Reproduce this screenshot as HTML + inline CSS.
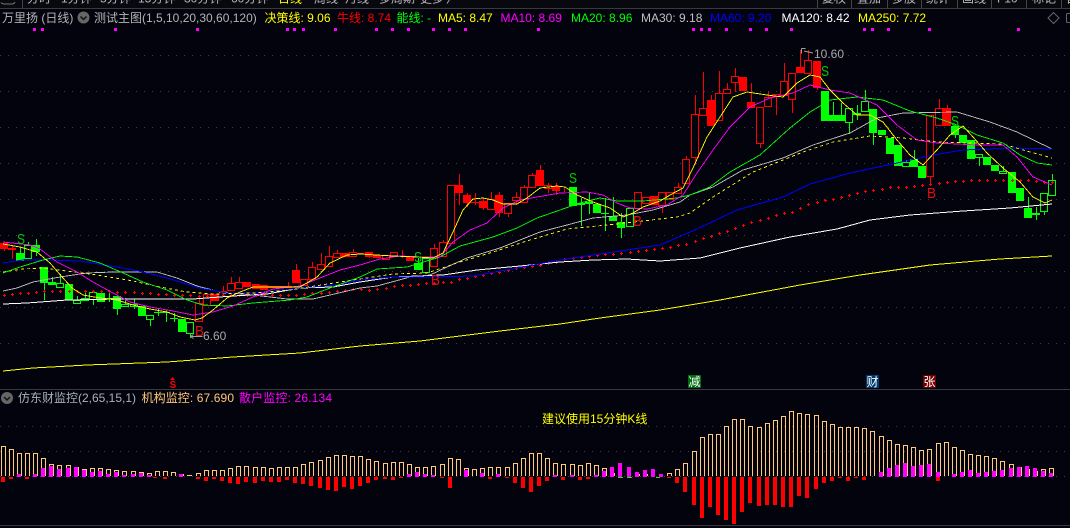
<!DOCTYPE html>
<html><head><meta charset="utf-8"><style>
html,body{margin:0;padding:0;background:#03030e;width:1070px;height:528px;overflow:hidden}
svg{display:block}
text{font-family:"Liberation Sans","Noto Sans CJK SC",sans-serif;font-size:12px}
</style></head><body>
<svg width="1070" height="528" viewBox="0 0 1070 528" xmlns="http://www.w3.org/2000/svg">
<defs><marker id="p" markerUnits="userSpaceOnUse" markerWidth="3" markerHeight="3" refX="1.5" refY="1.5"><path d="M0 1.500h3M1.500 0v3" stroke="#f00" fill="none"/></marker></defs>
<rect width="1070" height="528" fill="#03030e"/>
<rect width="1070" height="8" fill="#08080f"/>
<!-- top toolbar -->
<g fill="#b8b8b8">
<text x="27" y="2.500">分时</text><text x="61" y="2.500">1分钟</text><text x="100" y="2.500">5分钟</text><text x="138" y="2.500">15分钟</text><text x="184" y="2.500">30分钟</text><text x="231" y="2.500">60分钟</text><text x="278" y="2.500" fill="#ff0">日线</text><text x="314" y="2.500">周线</text><text x="345" y="2.500">月线</text><text x="379" y="2.500">多周期</text><text x="420" y="2.500">更多</text><text x="446" y="2.500">〉</text>
<text x="822" y="2.500">复权</text><text x="857" y="2.500">叠加</text><text x="892" y="2.500">多股</text><text x="926" y="2.500">统计</text><text x="962" y="2.500">画线</text><text x="997" y="2.500">F10</text><text x="1032" y="2.500">标记</text><text x="1066" y="2.500">自</text>
</g>
<path d="M22.500 0V8M817.500 0V8M851.500 0V8M887.500 0V8M921.500 0V8M957.500 0V8M991.500 0V8M1026.500 0V8M1061.500 0V8" stroke="#444" fill="none"/>
<path d="M1 2.500q1 1.500 3 1.500h8q2 0 3-2" stroke="#777" fill="none"/>
<path d="M0 8.500H1070M0 389.500H1070M0 525.500H1070" stroke="#3a3a3e" fill="none"/>
<!-- grid -->
<path d="M0 55.500H1070M0 91.500H1070M0 127.500H1070M0 163.500H1070M0 199.500H1070M0 235.500H1070M0 271.500H1070M0 307.500H1070M0 343.500H1070M0 426.500H1070M0 451.500H1070M0 476.500H1070" stroke="#3a3a40" stroke-dasharray="1 7" fill="none"/>
<!-- header -->
<text x="2" y="22" fill="#b4b4b4">万里扬 (日线)</text>
<circle cx="83.500" cy="17.500" r="6" fill="#666"/><path d="M80.500 16.500l3 3 3-3" stroke="#111" stroke-width="1.500" fill="none"/>
<text x="94" y="22" fill="#b4b4b4">测试主图(1,5,10,20,30,60,120)</text>
<text x="264.500" y="22" fill="#ff0">决策线: 9.06</text>
<text x="337" y="22" fill="#f00">牛线: 8.74</text>
<text x="396.500" y="22" fill="#0f0">能线: -</text>
<text x="438" y="22" fill="#ff0">MA5: 8.47</text>
<text x="500.500" y="22" fill="#f0f">MA10: 8.69</text>
<text x="571" y="22" fill="#0f0">MA20: 8.96</text>
<text x="641" y="22" fill="#c0c0c0">MA30: 9.18</text>
<text x="710" y="22" fill="#00f">MA60: 9.20</text>
<text x="781.500" y="22" fill="#fff">MA120: 8.42</text>
<text x="858" y="22" fill="#ff0">MA250: 7.72</text>
<path d="M1053.500 12.500l5.500 5.500-5.500 5.500-5.500-5.500zM1071 13.500h-3.500q-1 0-1 1v7q0 1 1 1h3.500" stroke="#666" fill="none"/>
<path fill="#f0f" d="M33 28h3v3h-3zM41 28h3v3h-3zM114 28h3v3h-3zM196 28h3v3h-3zM286 28h3v3h-3zM293 28h3v3h-3zM302 28h3v3h-3zM334 28h3v3h-3zM375 28h3v3h-3zM391 28h3v3h-3zM407 28h3v3h-3zM432 28h3v3h-3zM448 28h3v3h-3zM464 28h3v3h-3zM537 28h3v3h-3zM692 28h3v3h-3zM700 28h3v3h-3zM708 28h3v3h-3zM725 28h3v3h-3zM749 28h3v3h-3zM765 28h3v3h-3zM790 28h3v3h-3zM863 28h3v3h-3zM871 28h3v3h-3zM887 28h3v3h-3zM928 28h3v3h-3zM1017 28h3v3h-3z"/>
<!-- wicks -->
<path stroke="#f00" fill="none" d="M4.500 242V251M12.500 245V259M199.500 295V321M223.500 286V293M231.500 277V290M239.500 277V288M288.500 282V288M296.500 264V283M312.500 262V279M321.500 253V269M329.500 246V266M337.500 250V257M353.500 249V256M369.500 252V258M402.500 250V258M434.500 244V266M443.500 240V256M459.500 174V205M467.500 193V207M475.500 193V205M483.500 198V210M491.500 192V209M499.500 192V217M508.500 203V217M516.500 192V205M524.500 185V202M532.500 173V187M540.500 165V186M548.500 183V193M556.500 183V195M564.500 187V192M638.500 192V208M662.500 192V213M678.500 183V193M686.500 156V183M695.500 95V165M703.500 72V115M711.500 95V126M719.500 71V120M727.500 83V93M735.500 68V92M751.500 83V108M760.500 107V148M768.500 92V106M776.500 94V115M784.500 63V95M792.500 73V113M800.500 50V73M808.500 50V73M817.500 61V90M930.500 115V183M939.500 99V125M947.500 105V126"/>
<path stroke="#0f0" fill="none" d="M20.500 247V261M28.500 242V258M36.500 239V256M44.500 267V300M52.500 277V285M60.500 274V287M77.500 296V303M85.500 293V300M93.500 292V305M109.500 290V302M117.500 296V315M125.500 298V306M134.500 299V309M150.500 315V326M158.500 308V316M166.500 310V322M174.500 313V322M190.500 322V338M418.500 258V270M426.500 258V272M581.500 198V226M589.500 193V214M605.500 198V231M613.500 197V221M621.500 213V238M630.500 208V226M833.500 102V121M841.500 103V121M849.500 108V134M857.500 105V120M865.500 90V111M873.500 109V145M906.500 160V166M914.500 150V167M955.500 126V138M979.500 154V166M1003.500 166V173M1028.500 197V218M1036.500 207V220M1044.500 193V215M1052.500 174V195"/>
<!-- hollow candles -->
<path stroke="#f00" fill="#03030e" d="M195.500 303.500h7V321.500h-7zM203.500 294.500h7V305.500h-7zM227.500 283.500h7V290.500h-7zM235.500 282.500h7V288.500h-7zM300.500 279.500h7V285.500h-7zM308.500 267.500h7V279.500h-7zM317.500 264.500h7V269.500h-7zM325.500 256.500h7V266.500h-7zM333.500 253.500h7V257.500h-7zM349.500 252.500h7V256.500h-7zM382.500 255.500h7V259.500h-7zM390.500 252.500h7V256.500h-7zM430.500 248.500h7V266.500h-7zM439.500 242.500h7V256.500h-7zM447.500 185.500h7V243.500h-7zM487.500 199.500h7V209.500h-7zM504.500 203.500h7V213.500h-7zM512.500 197.500h7V200.500h-7zM520.500 187.500h7V202.500h-7zM528.500 175.500h7V187.500h-7zM544.500 185.500h7V188.500h-7zM634.500 192.500h7V208.500h-7zM642.500 197.500h7V203.500h-7zM658.500 192.500h7V205.500h-7zM666.500 192.500h7V199.500h-7zM674.500 187.500h7V193.500h-7zM682.500 159.500h7V183.500h-7zM691.500 114.500h7V157.500h-7zM699.500 108.500h7V115.500h-7zM715.500 93.500h7V120.500h-7zM723.500 89.500h7V93.500h-7zM731.500 76.500h7V82.500h-7zM756.500 107.500h7V143.500h-7zM764.500 97.500h7V106.500h-7zM772.500 94.500h7V96.500h-7zM780.500 81.500h7V95.500h-7zM788.500 73.500h7V99.500h-7zM804.500 60.500h7V73.500h-7zM926.500 115.500h7V176.500h-7zM935.500 108.500h7V125.500h-7z"/>
<path stroke="#0f0" fill="#03030e" d="M24.500 245.500h7V258.500h-7zM56.500 283.500h7V287.500h-7zM73.500 300.500h7V303.500h-7zM81.500 298.500h7V300.500h-7zM89.500 292.500h7V299.500h-7zM121.500 304.500h7V306.500h-7zM130.500 304.500h7V306.500h-7zM146.500 315.500h7V319.500h-7zM186.500 322.500h7V333.500h-7zM422.500 258.500h7V272.500h-7zM626.500 208.500h7V226.500h-7zM845.500 108.500h7V122.500h-7zM861.500 101.500h7V111.500h-7zM902.500 162.500h7V166.500h-7zM975.500 154.500h7V157.500h-7zM999.500 171.500h7V173.500h-7zM1040.500 193.500h7V211.500h-7zM1048.500 180.500h7V195.500h-7z"/>
<!-- filled candles -->
<path stroke="#f00" stroke-width="8" fill="none" d="M4 243V249M12 248V250M215 294V301M223 291V293M247 282V287M256 284V289M264 285V290M272 286V288M280 286V288M288 286V288M296 270V283M345 253V257M361 253V254M369 252V257M377 255V258M410 256V261M459 185V193M467 195V203M475 202V203M483 201V208M499 195V213M540 170V186M556 186V191M654 196V205M711 100V126M743 77V91M751 102V108M800 67V73M817 61V88M947 108V126"/>
<path stroke="#0f0" stroke-width="8" fill="none" d="M20 253V261M36 245V252M44 267V283M52 282V285M69 284V300M101 293V302M109 298V299M117 296V309M142 306V316M158 312V313M166 312V313M174 318V319M182 319V332M418 263V270M573 187V206M581 203V205M589 202V204M597 204V213M605 213V214M613 216V221M621 222V228M825 91V121M833 115V121M841 115V121M857 113V115M873 109V133M882 130V135M890 138V154M898 145V166M914 159V167M922 166V178M955 126V135M963 135V143M971 140V159M987 157V165M995 165V171M1012 172V193M1020 188V201M1028 208V218M1036 213V215"/>
<!-- red cross line -->
<polyline transform="translate(.5 .5)" fill="none" marker-start="url(#p)" marker-mid="url(#p)" marker-end="url(#p)" points="4,295 12,294 20,293 28,293 36,292 44,291 52,291 60,291 69,291 77,291 85,291 93,291 101,291 109,291 117,292 125,292 134,292 142,293 150,293 158,294 166,294 174,295 182,295 190,295 199,296 207,296 215,296 223,295 231,295 239,295 247,295 256,295 264,295 272,295 280,295 288,295 296,295 304,294 312,293 321,293 329,292 337,291 345,290 353,289 361,289 369,290 377,289 386,288 394,286 402,285 410,285 418,284 426,283 434,283 443,282 451,282 459,279 467,278 475,276 483,275 491,273 499,272 508,270 516,268 524,267 532,266 540,265 548,263 556,262 564,259 573,258 581,257 589,256 597,255 605,254 613,254 621,253 630,252 638,251 646,250 654,249 662,248 670,247 678,245 686,244 695,241 703,238 711,236 719,233 727,231 735,228 743,225 751,222 760,220 768,218 776,215 784,213 792,212 800,208 808,204 817,202 825,200 833,199 841,197 849,195 857,193 865,191 873,190 882,189 890,187 898,187 906,187 914,186 922,185 930,184 939,183 947,182 955,181 963,181 971,180 979,180 987,180 995,180 1003,180 1012,180 1020,180 1028,180 1036,181 1044,182 1052,182"/>
<!-- MA lines -->
<g fill="none" shape-rendering="crispEdges">
<polyline stroke="#ff0" points="3,371 33,368 87,365 167,362 233,357 300,353 360,346 420,341 500,331 560,324 600,318 660,310 720,300 800,285 860,275 930,265 1000,259 1052,256"/>
<polyline stroke="#fff" points="3,304 27,303 67,300 120,299 193,299 233,296 267,294 300,288 333,287 360,282 393,277 443,275 477,270 520,266 560,262 593,260 627,259 660,261 700,258 740,248 790,237 837,229 870,220 910,215 963,211 1010,208 1052,204"/>
<polyline stroke="#c0c0c0" stroke-width=".9" points="3,291 17,288 33,282 60,277 87,273 113,272 157,272 177,278 197,286 220,292 253,295 287,299 313,299 360,288 377,286 410,277 430,275 447,267 467,258 500,248 520,240 540,232 567,225 593,218 627,215 653,210 680,202 690,195 713,187 743,170 783,158 813,145 850,133 877,118 903,113 957,112 990,122 1017,132 1052,149"/>
<polyline stroke="#00f" points="3,263 23,260 50,260 80,261 117,267 143,272 167,278 200,288 227,293 260,293 300,288 337,285 360,280 393,277 433,277 473,276 517,268 560,260 593,255 627,250 660,245 697,229 737,210 783,197 810,184 850,173 897,163 933,155 963,150 1010,148 1052,149"/>
<polyline stroke="#ff0" stroke-width=".9" stroke-dasharray="3 3" points="3,272 23,269 43,268 67,271 97,275 133,281 160,287 187,292 213,294 253,293 290,290 340,282 393,274 427,273 460,262 493,252 530,240 567,229 607,225 643,221 677,217 690,213 713,197 753,172 803,152 833,142 870,136 903,138 937,142 1003,144 1023,150 1052,158"/>
<polyline stroke="#0f0" stroke-width=".9" points="3,273 20,267 43,260 60,256 77,257 100,263 123,273 143,282 167,290 187,300 203,305 227,306 253,303 290,300 307,297 330,288 360,277 377,269 407,267 440,257 460,246 493,237 517,228 537,218 560,210 580,203 600,198 617,201 643,201 677,198 690,195 710,187 730,172 760,155 790,128 810,112 830,100 857,97 883,100 910,111 937,118 957,125 977,135 1003,143 1020,155 1037,163 1052,165"/>
<polyline stroke="#f0f" stroke-width=".9" points="3,242 30,245 40,249 57,262 77,272 93,282 113,293 130,302 150,307 173,311 193,315 213,312 233,306 253,297 273,289 300,286 320,278 340,270 360,265 380,259 400,256 427,257 440,257 453,242 470,230 487,223 503,208 520,200 537,197 560,193 587,192 603,195 617,203 630,208 647,209 667,205 683,195 697,173 713,150 730,127 750,107 770,98 793,93 810,85 830,90 850,93 877,105 897,125 917,140 937,143 957,144 977,145 1003,145 1017,157 1033,177 1052,185"/>
<polyline stroke="#ff0" stroke-width=".9" points="3,244 20,247 37,252 50,263 63,278 72,288 83,295 100,298 117,300 133,305 150,309 167,312 180,317 195,320 202,318 213,310 227,298 240,292 253,287 277,287 300,287 317,277 330,263 347,255 360,254 393,256 417,257 433,258 443,253 453,232 463,210 473,199 483,198 493,200 503,204 517,204 527,198 540,188 557,186 565,187 577,195 593,202 610,208 623,217 633,213 643,207 660,201 670,195 683,188 693,168 707,137 720,117 733,97 747,92 767,95 783,97 797,83 810,75 820,77 830,90 843,103 857,115 870,115 883,122 897,140 910,155 923,165 937,150 950,135 963,126 973,137 987,153 1003,168 1020,182 1033,197 1045,203 1052,200"/>
</g>
<!-- signal labels -->
<g style="font-size:15px">
<text x="17" y="244" fill="#0c0" style="font-size:15px" textLength="8" lengthAdjust="spacingAndGlyphs">S</text>
<text x="195" y="336" fill="#e01010" style="font-size:15px" textLength="9" lengthAdjust="spacingAndGlyphs">B</text>
<text x="414" y="262" fill="#0c0" style="font-size:15px" textLength="8" lengthAdjust="spacingAndGlyphs">S</text>
<text x="431" y="285" fill="#e01010" style="font-size:15px" textLength="9" lengthAdjust="spacingAndGlyphs">B</text>
<text x="569" y="183" fill="#0c0" style="font-size:15px" textLength="8" lengthAdjust="spacingAndGlyphs">S</text>
<text x="633" y="226" fill="#e01010" style="font-size:15px" textLength="9" lengthAdjust="spacingAndGlyphs">B</text>
<text x="821" y="76" fill="#0c0" style="font-size:15px" textLength="8" lengthAdjust="spacingAndGlyphs">S</text>
<text x="927" y="198" fill="#e01010" style="font-size:15px" textLength="9" lengthAdjust="spacingAndGlyphs">B</text>
<text x="951" y="126" fill="#0c0" style="font-size:15px" textLength="8" lengthAdjust="spacingAndGlyphs">S</text>
</g>
<path d="M190.500 336.500h12M190.500 336.500l3-2M190.500 336.500l3 2" stroke="#a0a0a0" fill="none"/>
<text x="203" y="340" fill="#a8a8a8">6.60</text>
<path d="M801.500 48.500h4M801.500 48.500v5M804 51l9 2" stroke="#a0a0a0" fill="none"/>
<text x="814" y="58" fill="#a8a8a8">10.60</text>
<!-- event markers -->
<path fill="#f00" d="M172.500 377l2.500 3h-5z"/>
<text x="169.500" y="388" fill="#f00" style="font-size:10px;font-weight:bold">S</text>
<rect x="688" y="375" width="13" height="13" fill="#006b10"/><text x="688.500" y="386" fill="#fff">减</text>
<rect x="866" y="375" width="13" height="13" fill="#003a6c"/><text x="866.500" y="386" fill="#fff">财</text>
<rect x="923" y="375" width="13" height="13" fill="#700000"/><text x="923.500" y="386" fill="#fff">张</text>
<!-- lower panel -->
<circle cx="7" cy="398" r="6" fill="#666"/><path d="M4 397l3 3 3-3" stroke="#111" stroke-width="1.500" fill="none"/>
<text x="18" y="402" fill="#a8b0b8">仿东财监控(2,65,15,1)</text>
<text x="141.500" y="402" fill="#ffc87a" textLength="92.500">机构监控: 67.690</text>
<text x="239" y="402" fill="#f0f" textLength="93">散户监控: 26.134</text>
<text x="542" y="423" fill="#ff0">建议使用15分钟K线</text>
<!-- tan bars -->
<path stroke="#ffc87a" fill="none" d="M1.500 476V446.500h4V476M9.500 476V449.500h4V476M17.500 476V453.500h4V476M25.500 476V453.500h4V476M33.500 476V453.500h4V476M41.500 476V458.500h4V476M49.500 476V464.500h4V476M57.500 476V465.500h4V476M66.500 476V465.500h4V476M74.500 476V467.500h4V476M82.500 476V469.500h4V476M90.500 476V468.500h4V476M98.500 476V468.500h4V476M106.500 476V469.500h4V476M114.500 476V470.500h4V476M122.500 476V471.500h4V476M131.500 476V471.500h4V476M139.500 476V472.500h4V476M147.500 476V473.500h4V476M155.500 476V471.500h4V476M163.500 476V471.500h4V476M171.500 476V472.500h4V476M179.500 476V474.500h4V476M187.500 476V475.500h4V476M196.500 476V473.500h4V476M204.500 476V470.500h4V476M212.500 476V470.500h4V476M220.500 476V470.500h4V476M228.500 476V468.500h4V476M236.500 476V466.500h4V476M244.500 476V466.500h4V476M253.500 476V467.500h4V476M261.500 476V467.500h4V476M269.500 476V468.500h4V476M277.500 476V467.500h4V476M285.500 476V467.500h4V476M293.500 476V467.500h4V476M301.500 476V464.500h4V476M309.500 476V462.500h4V476M318.500 476V460.500h4V476M326.500 476V457.500h4V476M334.500 476V455.500h4V476M342.500 476V455.500h4V476M350.500 476V456.500h4V476M358.500 476V456.500h4V476M366.500 476V459.500h4V476M374.500 476V461.500h4V476M383.500 476V463.500h4V476M391.500 476V462.500h4V476M399.500 476V462.500h4V476M407.500 476V464.500h4V476M415.500 476V467.500h4V476M423.500 476V467.500h4V476M431.500 476V466.500h4V476M440.500 476V464.500h4V476M448.500 476V458.500h4V476M456.500 476V459.500h4V476M464.500 476V468.500h4V476M472.500 476V469.500h4V476M480.500 476V468.500h4V476M488.500 476V467.500h4V476M496.500 476V467.500h4V476M505.500 476V467.500h4V476M513.500 476V463.500h4V476M521.500 476V458.500h4V476M529.500 476V453.500h4V476M537.500 476V453.500h4V476M545.500 476V458.500h4V476M553.500 476V463.500h4V476M561.500 476V464.500h4V476M570.500 476V464.500h4V476M578.500 476V465.500h4V476M586.500 476V463.500h4V476M594.500 476V465.500h4V476M602.500 476V468.500h4V476M610.500 476V473.500h4V476M635.500 476V474.500h4V476M643.500 476V474.500h4V476M667.500 476V473.500h4V476M675.500 476V469.500h4V476M683.500 476V463.500h4V476M692.500 476V451.500h4V476M700.500 476V437.500h4V476M708.500 476V434.500h4V476M716.500 476V434.500h4V476M724.500 476V426.500h4V476M732.500 476V419.500h4V476M740.500 476V419.500h4V476M748.500 476V426.500h4V476M757.500 476V427.500h4V476M765.500 476V423.500h4V476M773.500 476V420.500h4V476M781.500 476V416.500h4V476M789.500 476V411.500h4V476M797.500 476V413.500h4V476M805.500 476V414.500h4V476M814.500 476V415.500h4V476M822.500 476V421.500h4V476M830.500 476V424.500h4V476M838.500 476V427.500h4V476M846.500 476V427.500h4V476M854.500 476V427.500h4V476M862.500 476V428.500h4V476M870.500 476V431.500h4V476M879.500 476V436.500h4V476M887.500 476V440.500h4V476M895.500 476V444.500h4V476M903.500 476V445.500h4V476M911.500 476V447.500h4V476M919.500 476V450.500h4V476M927.500 476V449.500h4V476M936.500 476V443.500h4V476M944.500 476V442.500h4V476M952.500 476V447.500h4V476M960.500 476V450.500h4V476M968.500 476V454.500h4V476M976.500 476V455.500h4V476M984.500 476V456.500h4V476M992.500 476V458.500h4V476M1000.500 476V461.500h4V476M1009.500 476V464.500h4V476M1017.500 476V467.500h4V476M1025.500 476V469.500h4V476M1033.500 476V471.500h4V476M1041.500 476V469.500h4V476M1049.500 476V468.500h4V476"/>
<!-- magenta bars -->
<path stroke="#f0f" stroke-width="4" fill="none" d="M19 477v-3M35 477v-3M43 477v-9M51 477v-11M59 477v-8M68 477v-9M76 477v-10M84 477v-7M92 477v-5M100 477v-6M108 477v-3M116 477v-5M124 477v-2M133 477v-3M141 477v-4M149 477v-2M181 477v-3M409 477v-3M417 477v-5M425 477v-3M433 477v-2M466 477v-7M482 477v-4M498 477v-3M555 477v-2M572 477v-2M596 477v-2M604 477v-6M612 477v-10M620 477v-14M629 477v-10M637 477v-5M645 477v-7M653 477v-8M661 477v-3M881 477v-5M889 477v-9M897 477v-12M905 477v-14M913 477v-11M921 477v-12M929 477v-13M938 477v-5M954 477v-3M962 477v-5M970 477v-7M978 477v-4M986 477v-5M994 477v-6M1002 477v-7M1011 477v-9M1019 477v-10M1027 477v-11M1035 477v-9M1043 477v-6M1051 477v-4"/>
<!-- red bars -->
<path stroke="#f00" stroke-width="4" fill="none" d="M3 477v5M11 477v2M27 477v2M155 477v1M165 477v2M198 477v2M206 477v4M214 477v2M222 477v4M230 477v6M238 477v7M246 477v5M255 477v6M263 477v4M271 477v5M279 477v5M287 477v3M295 477v6M303 477v7M311 477v9M320 477v11M328 477v13M336 477v14M344 477v10M352 477v12M360 477v9M368 477v6M376 477v3M385 477v2M393 477v3M401 477v1M442 477v1M450 477v11M490 477v2M507 477v1M515 477v6M523 477v11M531 477v15M539 477v9M547 477v4M563 477v3M580 477v3M588 477v2M669 477v1M677 477v6M685 477v15M694 477v28M702 477v41M710 477v30M718 477v38M726 477v43M734 477v47M742 477v35M750 477v26M759 477v29M767 477v28M775 477v28M783 477v30M791 477v30M799 477v19M807 477v21M816 477v12M824 477v6M832 477v4M840 477v1M848 477v4M856 477v1M864 477v3M938 477v4"/>
<path stroke="#0f0" fill="none" d="M618 477.500h5M627 477.500h5M656 477.500h4"/>
</svg>
</body></html>
